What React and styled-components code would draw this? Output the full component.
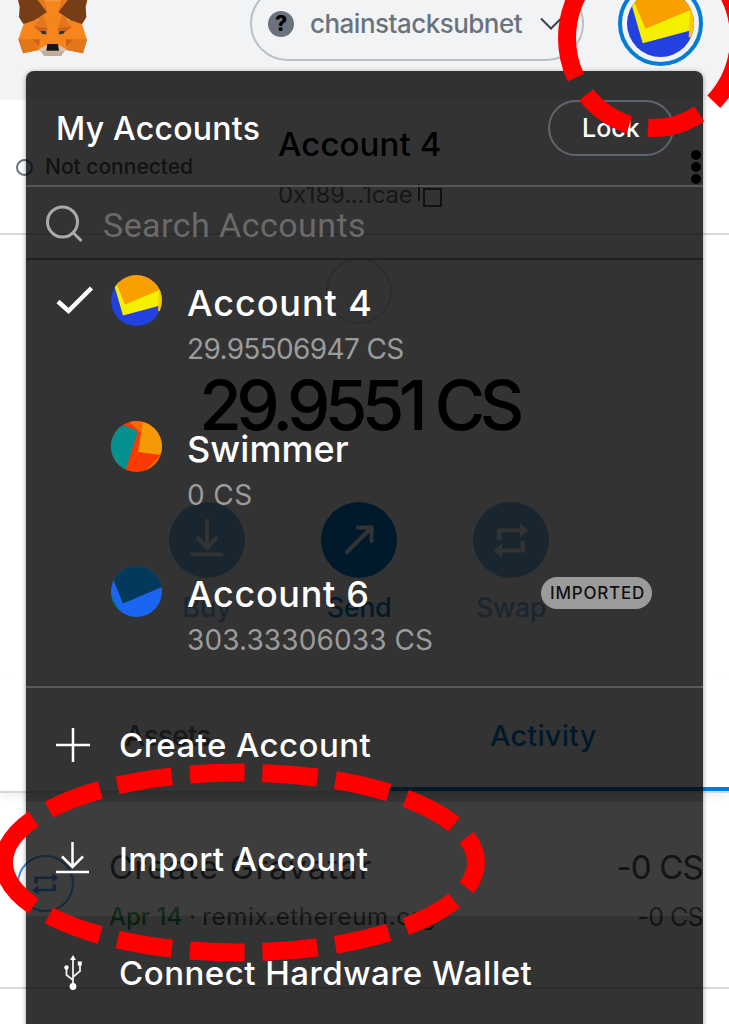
import React from "react";
import styled, { createGlobalStyle } from "styled-components";

const Global = createGlobalStyle`
  * { box-sizing: border-box; }
  body { margin: 0; background: #fff; overflow: hidden; }
`;

const Screen = styled.div`
  position: relative;
  width: 729px;
  height: 1024px;
  overflow: hidden;
  background: #fff;
  font-family: Inter, "Liberation Sans", sans-serif;
`;

const Text = styled.span`
  display: block;
  flex: none;
  white-space: pre;
  font-size: ${(p) => p.$size}px;
  line-height: ${(p) => p.$line || 40}px;
  font-weight: ${(p) => p.$weight || 400};
  color: ${(p) => p.$color || "#fff"};
  letter-spacing: ${(p) => p.$track || 0}px;
`;

/* ---------- wallet page ---------- */

const Header = styled.header`
  display: flex;
  align-items: flex-start;
  height: 100px;
  padding-left: 17px;
  background: #f2f3f4;
`;

const Network = styled.div`
  display: flex;
  align-items: center;
  flex: none;
  width: 334px;
  height: 75px;
  margin: -14px 0 0 162px;
  padding-left: 16px;
  border: 2px solid #bbc0c5;
  border-radius: 38px;
  svg:last-child { margin-left: 18px; }
`;

const Question = styled.span`
  display: grid;
  place-items: center;
  width: 26px;
  height: 26px;
  margin-right: 16px;
  border-radius: 50%;
  background: #6a737d;
  color: #000;
  font-size: 21px;
  font-weight: 800;
  line-height: 26px;
`;

const AvatarRing = styled.div`
  flex: none;
  width: 85px;
  height: 85px;
  margin: -19px 0 0 34px;
  padding: 4px;
  border: 4.5px solid #037dd6;
  border-radius: 50%;
  background: #f2f3f4;
  svg { display: block; margin: 0.5px; }
`;

const AccountBar = styled.div`
  display: grid;
  grid-template-columns: 262px 1fr 10px;
  height: 135px;
  padding: 0 28px 0 16px;
  border-bottom: 2px solid #d6d9dc;
`;

const Status = styled.div`
  display: flex;
  align-items: center;
  gap: 12px;
  padding-top: 1px;
`;

const StatusDot = styled.span`
  width: 17px;
  height: 17px;
  border: 2px solid #6a737d;
  border-radius: 50%;
`;

const Identity = styled.div`
  padding-top: 24px;
`;

const Address = styled.div`
  display: flex;
  align-items: center;
  margin-top: 16px;
  svg { margin-left: 4px; }
`;

const Dots = styled.div`
  display: flex;
  flex-direction: column;
  gap: 2px;
  padding-top: 50px;
  i { width: 10px; height: 10px; border-radius: 50%; background: #000; }
`;

const Hero = styled.section`
  display: flex;
  flex-direction: column;
  align-items: center;
  padding-top: 23px;
  padding-right: 11px;
`;

const TokenRing = styled.div`
  width: 66px;
  height: 66px;
  margin-bottom: 41px;
  border: 2px solid #d6d9dc;
  border-radius: 50%;
`;

const Actions = styled.div`
  display: flex;
  gap: 36px;
  margin-top: 57px;
`;

const Action = styled.div`
  display: flex;
  flex-direction: column;
  align-items: center;
  width: 116px;
  opacity: ${(p) => (p.$faded ? 0.5 : 1)};
`;

const ActionDisc = styled.div`
  display: grid;
  place-items: center;
  width: 76px;
  height: 76px;
  margin-bottom: 15px;
  padding-bottom: ${(p) => p.$lift || 0}px;
  border-radius: 50%;
  background: #037dd6;
`;

const Tabs = styled.nav`
  display: grid;
  grid-template-columns: 364px 1fr;
  height: 115px;
  margin-top: 55px;
  border-bottom: 2px solid #d6d9dc;
  box-shadow: 0 4px 8px rgba(0, 0, 0, 0.06);
`;

const Tab = styled.div`
  display: flex;
  align-items: center;
  padding: 6px 0 0 ${(p) => p.$pad}px;
  border-bottom: 4px solid ${(p) => (p.$active ? "#037dd6" : "transparent")};
`;

const Activity = styled.section`
  display: grid;
  grid-template-columns: 92px 1fr auto;
  height: 196px;
  padding: 54px 26px 0 17px;
  border-bottom: 2px solid #d6d9dc;
  > svg { margin-top: 8px; }
`;

const Lines = styled.div`
  display: flex;
  flex-direction: column;
  gap: 15px;
  align-items: ${(p) => (p.$end ? "flex-end" : "flex-start")};
`;

const Inline = styled.div`
  display: flex;
`;

/* ---------- accounts menu ---------- */

const Menu = styled.aside`
  position: absolute;
  left: 26px;
  top: 71px;
  width: 677px;
  height: 970px;
  border-radius: 8px;
  background: rgba(0, 0, 0, 0.8);
  box-shadow: 0 1px 5px rgba(0, 0, 0, 0.4);
`;

const MenuHeader = styled.div`
  display: flex;
  align-items: center;
  justify-content: space-between;
  height: 116px;
  padding: 0 29px 0 30px;
  border-bottom: 2px solid #555;
  > span { padding-top: 2px; }
`;

const Lock = styled.div`
  display: flex;
  align-items: center;
  width: 126px;
  height: 56px;
  padding-left: 32px;
  border: 2px solid #5d6670;
  border-radius: 28px;
`;

const Search = styled.div`
  display: flex;
  align-items: center;
  gap: 19px;
  height: 73px;
  padding: 2px 0 0 20px;
  border-bottom: 2px solid #202020;
`;

const SearchHint = styled(Text)`
  font-family: Roboto, sans-serif;
  padding-top: 3px;
`;

const AccountList = styled.div`
  height: 428px;
  border-bottom: 2px solid #5a5a5a;
`;

const AccountRow = styled.div`
  display: grid;
  grid-template-columns: 54.5px 51px 1fr auto;
  height: 145.5px;
  padding: 18px 51px 0 30px;
`;

const Mark = styled.div`
  padding-top: 7px;
`;

const Face = styled.div`
  margin-top: -3px;
`;

const Details = styled.div`
  display: flex;
  flex-direction: column;
  gap: 2px;
  padding: 1px 0 0 25.5px;
`;

const Imported = styled.div`
  display: flex;
  align-items: center;
  width: 111px;
  height: 32px;
  margin-top: 8px;
  padding-left: 9px;
  border-radius: 16px;
  background: #9b9b9b;
`;

const MenuItem = styled.div`
  display: grid;
  grid-template-columns: 64px 1fr;
  align-items: center;
  height: 114.2px;
  padding-left: 29px;
  background: ${(p) => (p.$lit ? "rgba(255,255,255,0.05)" : "transparent")};
`;

const Annotations = styled.svg`
  position: absolute;
  left: 0;
  top: 0;
`;

function Fox() {
  return (
    <svg width="71" height="57" viewBox="50 0 213 171">
      <polygon fill="#f6851b" points="60,60 253,60 245,72 260,120 248,160 198,150 180,160 130,160 115,150 68,160 54,118 70,72" />
      <polygon fill="#e2761b" points="54,118 98,118 116,150 68,160" />
      <polygon fill="#e2761b" points="260,118 216,118 198,150 248,160" />
      <polygon fill="#f6851b" points="110,0 203,0 203,64 110,64" />
      <polygon fill="#763d16" points="53,0 112,0 140,36 105,60 70,72 56,52 58,20" />
      <polygon fill="#763d16" points="261,0 202,0 174,36 209,60 245,72 258,52 256,20" />
      <polygon fill="#e4761b" points="112,0 131,0 140,34" />
      <polygon fill="#e4761b" points="202,0 183,0 174,34" />
      <polygon fill="#f89c42" points="131,0 183,0 174,4 140,4" />
      <polygon fill="#e4751f" points="128,44 142,84 100,80" />
      <polygon fill="#e4751f" points="186,44 172,84 214,80" />
      <polygon fill="#cd6116" points="100,80 142,84 138,104 122,98" />
      <polygon fill="#cd6116" points="214,80 172,84 176,104 192,98" />
      <polygon fill="#cd6116" points="96,118 118,118 116,142" />
      <polygon fill="#cd6116" points="218,118 196,118 198,142" />
      <polygon fill="#233447" points="120,93 134,93 139,103 126,102" />
      <polygon fill="#233447" points="194,93 180,93 175,103 188,102" />
      <polygon fill="#d7c1b3" points="116,148 140,134 174,134 198,148 182,167 131,167" />
      <polygon fill="#c0ad9e" points="122,154 192,154 182,168 131,168" />
      <polygon fill="#161616" points="141,132 173,132 176,152 138,152" />
    </svg>
  );
}

function Avatar({ kind, size }) {
  const id = `clip-${kind}-${size}`;
  return (
    <svg width={size} height={size} viewBox="0 0 51 51">
      <clipPath id={id}><circle cx="25.5" cy="25.5" r="25.5" /></clipPath>
      <g clipPath={`url(#${id})`}>
        {kind === "sun" && (
          <>
            <rect width="51" height="51" fill="#2340e1" />
            <polygon fill="#f5f000" points="2,6 12,40.5 47.5,31 51,10" />
            <polygon fill="#f9c800" points="48,15 51,14 51,36 47,36" />
            <polygon fill="#fa9f00" points="0,-4 14,29.5 51,14 51,-4" />
          </>
        )}
        {kind === "swim" && (
          <>
            <rect width="51" height="51" fill="#fa3a00" />
            <polygon fill="#fa6a00" points="17,0 32,0 30,12 27,9" />
            <polygon fill="#f59a06" points="32,0 51,0 51,34 27,31" />
            <polygon fill="#fa7000" points="51,33 51,51 34,50" />
            <polygon fill="#03918f" points="0,0 12,4 27,10 14,51 0,51" />
          </>
        )}
        {kind === "sea" && (
          <>
            <rect width="51" height="51" fill="#1a66f2" />
            <polygon fill="#04739a" points="0,28 10,46 0,46" />
            <polygon fill="#033a5c" points="0,8 12,37.5 51,21 51,0 0,0" />
          </>
        )}
      </g>
    </svg>
  );
}

const SwapShape = ({ color }) => (
  <g fill={color}>
    <path d="M3 17V5.500H26V0L34 7.500L26 15V9.500H7.500V17Z" />
    <path d="M31 18V29.500H8V35L0 27.500L8 20V25.500H26.500V18Z" />
  </g>
);

const accounts = [
  { name: "Account 4", balance: "29.95506947 CS", kind: "sun", selected: true, nt: 0.95, bt: -0.65 },
  { name: "Swimmer", balance: "0 CS", kind: "swim", nt: 0.1, bt: 0.4 },
  { name: "Account 6", balance: "303.33306033 CS", kind: "sea", imported: true, nt: 0.7, bt: 0.12 },
];

export default function App() {
  return (
    <Screen>
      <Global />
      <Header>
        <Fox />
        <Network>
          <Question>?</Question>
          <Text $size={26} $weight={500} $color="#6a737d" $track={-0.52}>chainstacksubnet</Text>
          <svg width="22" height="14" viewBox="0 0 22 14" fill="none" stroke="#3d4248" strokeWidth="2">
            <path d="M1 1.500L11 11.500L21 1.500" />
          </svg>
        </Network>
        <AvatarRing><Avatar kind="sun" size={67} /></AvatarRing>
      </Header>

      <AccountBar>
        <Status>
          <StatusDot />
          <Text $size={21} $weight={500} $color="#535a61">Not connected</Text>
        </Status>
        <Identity>
          <Text $size={33} $weight={500} $color="#000" $track={0.1}>Account 4</Text>
          <Address>
            <Text $size={24} $line={30} $color="#6a737d" $track={-0.2}>0x189...1cae</Text>
            <svg width="26" height="26" viewBox="0 0 26 26" fill="none" stroke="#535a61" strokeWidth="2">
              <path d="M2 2V19M7 7H24V24H7Z" />
            </svg>
          </Address>
        </Identity>
        <Dots><i /><i /><i /></Dots>
      </AccountBar>

      <Hero>
        <TokenRing />
        <Text $size={69} $line={80} $weight={500} $color="#000" $track={-5.6}>29.9551 CS</Text>
        <Actions>
          <Action $faded>
            <ActionDisc $lift={4}>
              <svg width="34" height="38" viewBox="0 0 34 38" fill="none" stroke="#fff" strokeWidth="4" strokeLinecap="round">
                <path d="M17 2V29M8 19.500L17 29L26 19.500M2.500 35.500H31.500" />
              </svg>
            </ActionDisc>
            <Text $size={27} $line={30} $weight={500} $color="#037dd6">Buy</Text>
          </Action>
          <Action>
            <ActionDisc>
              <svg width="30" height="30" viewBox="0 0 30 30" fill="none" stroke="#fff" strokeWidth="4" strokeLinecap="round">
                <path d="M3 27L27.500 2.500M14 2.500H27.500V16" />
              </svg>
            </ActionDisc>
            <Text $size={27} $line={30} $weight={500} $color="#037dd6" $track={-0.4}>Send</Text>
          </Action>
          <Action $faded>
            <ActionDisc>
              <svg width="34" height="35" viewBox="0 0 34 35"><SwapShape color="#fff" /></svg>
            </ActionDisc>
            <Text $size={27} $line={30} $weight={500} $color="#037dd6" $track={-0.5}>Swap</Text>
          </Action>
        </Actions>
      </Hero>

      <Tabs>
        <Tab $pad={125}><Text $size={28} $weight={500} $color="#6a737d" $track={-0.9}>Assets</Text></Tab>
        <Tab $pad={126} $active><Text $size={29} $weight={500} $color="#037dd6" $track={0.15}>Activity</Text></Tab>
      </Tabs>

      <Activity>
        <svg width="57" height="57" viewBox="0 0 57 57">
          <circle cx="28.500" cy="28.500" r="27.500" fill="none" stroke="#3b8fee" strokeWidth="2" />
          <g transform="translate(15 18) scale(.78 .62)"><SwapShape color="#2f80ed" /></g>
        </svg>
        <Lines>
          <Text $size={33} $color="#24272a" $track={1.1}>Create Gravatar</Text>
          <Inline>
            <Text $size={24} $line={30} $weight={500} $color="#28a745">Apr 14 · </Text>
            <Text $size={24} $line={30} $color="#535a61" $track={0.65}>remix.ethereum.org</Text>
          </Inline>
        </Lines>
        <Lines $end>
          <Text $size={33} $color="#24272a" $track={-0.8}>-0 CS</Text>
          <Text $size={25} $line={30} $color="#535a61" $track={-0.6}>-0 CS</Text>
        </Lines>
      </Activity>

      <Menu>
        <MenuHeader>
          <Text $size={32} $weight={500} $track={0.25}>My Accounts</Text>
          <Lock><Text $size={25} $weight={500}>Lock</Text></Lock>
        </MenuHeader>
        <Search>
          <svg width="38" height="38" viewBox="0 0 38 38" fill="none" stroke="#aaa" strokeWidth="3">
            <circle cx="16.500" cy="17" r="15" /><path d="M26.500 27L35.500 36" />
          </svg>
          <SearchHint $size={34} $color="#6a6a6a" $track={0.45}>Search Accounts</SearchHint>
        </Search>
        <AccountList>
          {accounts.map((a) => (
            <AccountRow key={a.name}>
              <Mark>
                {a.selected && (
                  <svg width="38" height="30" viewBox="0 0 38 30" fill="none" stroke="#fff" strokeWidth="4.500">
                    <path d="M2 16.500L12.500 26L35.500 3" />
                  </svg>
                )}
              </Mark>
              <Face><Avatar kind={a.kind} size={51} /></Face>
              <Details>
                <Text $size={36} $line={48} $weight={500} $track={a.nt}>{a.name}</Text>
                <Text $size={28} $line={40} $color="#9b9b9b" $track={a.bt}>{a.balance}</Text>
              </Details>
              {a.imported && (
                <Imported><Text $size={17} $line={32} $weight={500} $color="#111" $track={0.8}>IMPORTED</Text></Imported>
              )}
            </AccountRow>
          ))}
        </AccountList>
        <MenuItem>
          <svg width="36" height="36" viewBox="0 0 36 36" stroke="#fff" strokeWidth="2.500">
            <path d="M18 1V35M1 18H35" />
          </svg>
          <Text $size={33} $weight={500} $track={0.45}>Create Account</Text>
        </MenuItem>
        <MenuItem $lit>
          <svg width="36" height="34" viewBox="0 0 36 34" fill="none" stroke="#fff" strokeWidth="2.500">
            <path d="M17.500 0V25M7 14.500L17.500 25L28 14.500M1 30H34" />
          </svg>
          <Text $size={33} $weight={500} $track={0.38}>Import Account</Text>
        </MenuItem>
        <MenuItem>
          <svg width="36" height="36" viewBox="0 0 36 36" fill="none" stroke="#eee" strokeWidth="1.800">
            <path d="M18 4V30M18 25L11.500 20V13M18 22L25 16V9" />
            <g fill="#fff" stroke="none">
              <path d="M18 0L21 5H15Z" />
              <circle cx="18" cy="31.500" r="3.400" />
              <circle cx="11.500" cy="12.500" r="2.200" />
              <rect x="22.800" y="6.500" width="4" height="4" />
            </g>
          </svg>
          <Text $size={33} $weight={500} $track={0.5}>Connect Hardware Wallet</Text>
        </MenuItem>
      </Menu>

      <Annotations width="729" height="1024" viewBox="0 0 729 1024" fill="none" stroke="#fe0000" strokeWidth="18">
        <path
          d="M653 -52A86 90 0 0 0 653 128A86 90 0 0 0 653 -52"
          strokeDasharray="179 20 53 19 54 19 54 19 300"
        />
        <path
          d="M4 862.500A236 90 0 0 1 476 862.500A236 90 0 0 1 4 862.500"
          pathLength="1077"
          strokeDasharray="55 18"
        />
      </Annotations>
    </Screen>
  );
}
